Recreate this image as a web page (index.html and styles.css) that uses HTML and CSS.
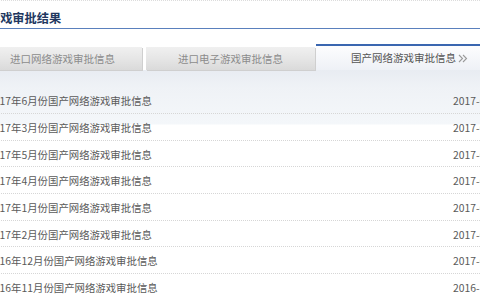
FILE: index.html
```html
<!DOCTYPE html>
<html lang="zh-CN">
<head>
    <meta charset="UTF-8">
    <meta name="viewport" content="width=device-width, initial-scale=1.0">
    <title>游戏审批结果</title>
    <link rel="stylesheet" href="styles.css">
</head>
<body>
    <div class="page">
        <!-- Title -->
        <div class="head">
            <h2 class="title">游戏审批结果</h2>
        </div>

        <!-- Tabs -->
        <div class="tabs">
            <a class="tab tab-first" href="#">进口网络游戏审批信息</a>
            <a class="tab" href="#">进口电子游戏审批信息</a>
            <a class="tab tab-active" href="#">国产网络游戏审批信息
                <svg class="more" width="10" height="9" viewBox="0 0 10 9">
                    <polyline points="1,1 4.5,4.5 1,8" fill="none" stroke="#9a9a9a" stroke-width="1.1"/>
                    <polyline points="5,1 8.5,4.5 5,8" fill="none" stroke="#9a9a9a" stroke-width="1.1"/>
                </svg>
            </a>
        </div>

        <!-- List -->
        <ul class="list">
            <li class="row"><a class="name" href="#">2017年6月份国产网络游戏审批信息</a><span class="date">2017-07-11</span></li>
            <li class="row"><a class="name" href="#">2017年3月份国产网络游戏审批信息</a><span class="date">2017-06-20</span></li>
            <li class="row"><a class="name" href="#">2017年5月份国产网络游戏审批信息</a><span class="date">2017-06-08</span></li>
            <li class="row"><a class="name" href="#">2017年4月份国产网络游戏审批信息</a><span class="date">2017-05-12</span></li>
            <li class="row"><a class="name" href="#">2017年1月份国产网络游戏审批信息</a><span class="date">2017-03-02</span></li>
            <li class="row"><a class="name" href="#">2017年2月份国产网络游戏审批信息</a><span class="date">2017-03-02</span></li>
            <li class="row"><a class="name" href="#">2016年12月份国产网络游戏审批信息</a><span class="date">2017-01-16</span></li>
            <li class="row"><a class="name" href="#">2016年11月份国产网络游戏审批信息</a><span class="date">2016-12-13</span></li>
        </ul>
    </div>
</body>
</html>
```

FILE: styles.css
```css
body {
    margin: 0;
    padding: 0;
    overflow: hidden;
    background: #fff;
    font-family: "Noto Sans CJK SC", "Noto Sans", sans-serif;
}

a {
    text-decoration: none;
}

.page {
    width: 530px;
    margin-left: -12px;
}

.head {
    height: 27px;
    border-top: 1px dotted #dcdcdc;
    border-bottom: 1px solid #5a80bd;
}

.title {
    margin: 0;
    padding-top: 8px;
    line-height: 19px;
    font-size: 12.2px;
    font-weight: bold;
    color: #22375f;
}

.tabs {
    display: flex;
    align-items: flex-end;
    height: 26px;
    margin-top: 15px;
}

.tab {
    display: block;
    width: 169px;
    height: 23px;
    line-height: 23px;
    margin-right: 4px;
    text-align: center;
    font-size: 10.5px;
    color: #8c8c8c;
    background: linear-gradient(#f0f0f0, #e6e6e6 50%, #dadada);
    box-shadow: 1px 1px 0 #cfcfcf;
}

.tab-first {
    width: 154px;
    padding-left: 22px;
    box-sizing: border-box;
    text-align: left;
}

.tab-active {
    flex: 1;
    height: 24px;
    line-height: 24px;
    margin-left: -3px;
    margin-right: 0;
    padding-left: 35px;
    text-align: left;
    color: #555;
    border-top: 2px solid #3a66b0;
    background: linear-gradient(#fdfdfe, #eef1f6);
    box-shadow: none;
}

.more {
    vertical-align: -1px;
}

.list {
    list-style: none;
    margin: 0;
    padding: 17.33px 0 0;
    background: linear-gradient(#e8ecf2, #eff2f6 17px, #f4f7fa 54px, #fff 55px) no-repeat;
}

.row {
    display: flex;
    height: 23.67px;
    padding-top: 2px;
    line-height: 23.67px;
    font-size: 10.4px;
    border-bottom: 1px dotted #d6d6d6;
}

.name {
    flex: 1;
    color: #5a5a5a;
}

.date {
    width: 65px;
    color: #5a5a5a;
}
```
